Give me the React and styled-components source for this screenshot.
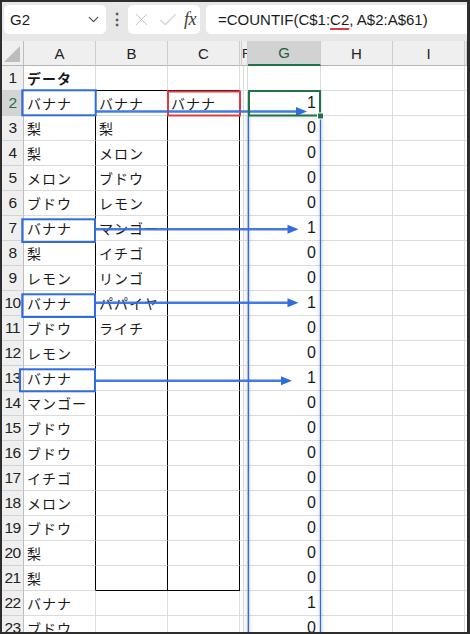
import React from 'react';
import styled, { createGlobalStyle } from 'styled-components';
import { ChevronDown, X, Check } from 'lucide-react';

const GlobalStyle = createGlobalStyle`
  html, body { margin: 0; padding: 0; background: #2b2b2b; }
  body { font-family: "Liberation Sans", "Noto Sans CJK JP", sans-serif; }
`;

const COLS = [
  { key: 'A', w: 72 },
  { key: 'B', w: 72 },
  { key: 'C', w: 72 },
  { key: 'DE', w: 2, label: '' },
  { key: 'F', w: 6 },
  { key: 'G', w: 73 },
  { key: 'H', w: 72 },
  { key: 'I', w: 72 },
];
const TEMPLATE = `22px ${COLS.map((c) => c.w + 'px').join(' ')} 1fr`;

const colA = ['データ', 'バナナ', '梨', '梨', 'メロン', 'ブドウ', 'バナナ', '梨', 'レモン', 'バナナ', 'ブドウ', 'レモン', 'バナナ', 'マンゴー', 'ブドウ', 'ブドウ', 'イチゴ', 'メロン', 'ブドウ', '梨', '梨', 'バナナ', 'ブドウ'];
const colB = ['', 'バナナ', '梨', 'メロン', 'ブドウ', 'レモン', 'マンゴー', 'イチゴ', 'リンゴ', 'パパイヤ', 'ライチ'];
const colG = ['', 1, 0, 0, 0, 0, 1, 0, 0, 1, 0, 0, 1, 0, 0, 0, 0, 0, 0, 0, 0, 1, 0];

const Page = styled.div`
  width: 470px;
  height: 634px;
  box-sizing: border-box;
  padding: 2px 3px 2px 2px;
  background: #2d2d2d;
  overflow: hidden;
`;

const Sheet = styled.div`
  position: relative;
  width: 100%;
  height: 100%;
  background: #fff;
  overflow: hidden;
  display: flex;
  flex-direction: column;
`;

const FormulaBar = styled.div`
  flex: none;
  height: 39px;
  box-sizing: border-box;
  background: #e7e7e7;
  display: flex;
  align-items: flex-start;
  padding: 3px 0 0 2px;
`;

const Box = styled.div`
  height: 29px;
  box-sizing: border-box;
  background: #fff;
  border-radius: 5px;
  display: flex;
  align-items: center;
`;

const NameBox = styled(Box)`
  width: 102px;
  padding: 0 4px 0 6px;
  justify-content: space-between;
  font-size: 15px;
  color: #1b1b1b;
`;

const Dots = styled.div`
  width: 22px;
  height: 29px;
  display: flex;
  align-items: center;
  justify-content: center;
  font-size: 16px;
  font-weight: 700;
  color: #555;
`;

const ActionBox = styled(Box)`
  width: 72px;
  padding: 0 4px 0 3px;
  justify-content: space-between;
`;

const Fx = styled.span`
  font-family: "Liberation Serif", serif;
  font-style: italic;
  font-size: 18px;
  color: #3c3c3c;
  letter-spacing: -0.5px;
`;

const FormulaBox = styled(Box)`
  flex: 1;
  margin-left: 6px;
  padding-left: 12px;
  border-radius: 5px 0 0 5px;
  font-size: 15px;
  color: #1b1b1b;
  white-space: nowrap;
`;

const Squiggle = styled.span`
  text-decoration: underline;
  text-decoration-color: #e0393b;
  text-decoration-thickness: 1.5px;
  text-underline-offset: 3px;
`;

const HeaderRow = styled.div`
  flex: none;
  display: grid;
  grid-template-columns: ${TEMPLATE};
  height: 25px;
  background: #efefef;
`;

const Corner = styled.div`
  box-sizing: border-box;
  border-right: 1px solid #bdbdbd;
  border-bottom: 1px solid #b5b5b5;
  display: flex;
  align-items: flex-end;
  justify-content: flex-end;
  padding: 0 3px 3px 0;
`;

const ColHead = styled.div`
  box-sizing: border-box;
  border-right: 1px solid #cdcdcd;
  border-bottom: ${(p) => (p.$active ? '2px solid #217346' : '1px solid #b5b5b5')};
  background: ${(p) => (p.$active ? '#d2d2d2' : 'transparent')};
  color: ${(p) => (p.$active ? '#1d5e3a' : '#222')};
  display: flex;
  align-items: center;
  justify-content: ${(p) => (p.$narrow ? 'flex-start' : 'center')};
  font-size: ${(p) => (p.$narrow ? '13px' : '15px')};
  overflow: hidden;
`;

const Row = styled.div`
  flex: none;
  display: grid;
  grid-template-columns: ${TEMPLATE};
  height: 25px;
`;

const RowHead = styled.div`
  box-sizing: border-box;
  border-right: 1px solid #bdbdbd;
  border-bottom: 1px solid #d3d3d3;
  background: ${(p) => (p.$active ? '#d4d4d4' : '#efefef')};
  color: ${(p) => (p.$active ? '#217346' : '#222')};
  display: flex;
  align-items: center;
  justify-content: center;
  font-size: 15.5px;
  letter-spacing: -0.5px;
`;

const Cell = styled.div`
  box-sizing: border-box;
  border-right: 1px solid ${(p) => p.$right || '#dcdcdc'};
  border-bottom: 1px solid ${(p) => p.$bottom || '#dcdcdc'};
  display: flex;
  align-items: center;
  justify-content: ${(p) => (p.$num ? 'flex-end' : 'flex-start')};
  padding: ${(p) => (p.$num ? '0 4px 0 0' : '0 0 0 3px')};
  white-space: nowrap;
  font-family: ${(p) => (p.$num ? '"Liberation Sans", sans-serif' : '"Noto Sans CJK JP", sans-serif')};
  font-size: ${(p) => (p.$num ? '16px' : '14px')};
  font-weight: ${(p) => (p.$bold ? 700 : 400)};
  letter-spacing: ${(p) => (p.$num ? '0' : '1px')};
  color: #1a1a1a;
`;

const Overlay = styled.svg`
  position: absolute;
  top: 0;
  left: 0;
  pointer-events: none;
`;

const BLUE = '#2f6ce0';

function Arrow({ y, tip }) {
  return (
    <g>
      <line x1={96} y1={y} x2={tip - 8} y2={y} stroke={BLUE} strokeWidth={2.4} strokeOpacity={0.9} />
      <polygon points={`${tip - 11},${y - 4.5} ${tip},${y} ${tip - 11},${y + 4.5}`} fill={BLUE} />
    </g>
  );
}

function cellBorders(r, key) {
  const inBox = r >= 2 && r <= 21;
  const right = inBox && (key === 'A' || key === 'B' || key === 'C') ? '#000' : undefined;
  const bottom = (r === 1 || r === 21) && (key === 'B' || key === 'C') ? '#000' : undefined;
  return { $right: right, $bottom: bottom };
}

function cellValue(r, key) {
  if (key === 'A') return colA[r - 1];
  if (key === 'B') return colB[r - 1] || '';
  if (key === 'C') return r === 2 ? 'バナナ' : '';
  if (key === 'G') return colG[r - 1];
  return '';
}

export default function App() {
  const rows = Array.from({ length: 23 }, (_, i) => i + 1);
  return (
    <Page>
      <GlobalStyle />
      <Sheet>
        <FormulaBar>
          <NameBox>
            <span>G2</span>
            <ChevronDown size={17} strokeWidth={1.6} color="#444" />
          </NameBox>
          <Dots>⋮</Dots>
          <ActionBox>
            <X size={21} strokeWidth={1.1} color="#c4c4c4" />
            <Check size={22} strokeWidth={1.1} color="#c4c4c4" />
            <Fx>fx</Fx>
          </ActionBox>
          <FormulaBox>
            =COUNTIF(C$1:<Squiggle>C2</Squiggle>, A$2:A$61)
          </FormulaBox>
        </FormulaBar>

        <HeaderRow>
          <Corner>
            <svg width="16" height="16" viewBox="0 0 16 16">
              <polygon points="16,0 16,16 0,16" fill="#bdbdbd" />
            </svg>
          </Corner>
          {COLS.map((c) => (
            <ColHead key={c.key} $active={c.key === 'G'} $narrow={c.w < 10}>
              {c.label === '' ? '' : c.key}
            </ColHead>
          ))}
          <ColHead />
        </HeaderRow>

        {rows.map((r) => (
          <Row key={r}>
            <RowHead $active={r === 2}>{r}</RowHead>
            {COLS.map((c) => {
              const v = cellValue(r, c.key);
              return (
                <Cell key={c.key} {...cellBorders(r, c.key)} $num={c.key === 'G'} $bold={r === 1 && c.key === 'A'}>
                  {v}
                </Cell>
              );
            })}
            <Cell />
          </Row>
        ))}

        <Overlay width="465" height="630" viewBox="0 0 465 630">
          <defs>
            <filter id="soft" x="-20%" y="-5%" width="140%" height="110%">
              <feGaussianBlur stdDeviation="2" />
            </filter>
          </defs>
          <g transform="translate(-2,-2)">
            <rect x={248} y={116} width={73} height={530} fill="none" stroke="rgba(0,0,0,0.10)" strokeWidth={4} filter="url(#soft)" />
            <line x1={248.5} y1={92} x2={248.5} y2={640} stroke={BLUE} strokeWidth={1.3} />
            <line x1={320.5} y1={92} x2={320.5} y2={640} stroke={BLUE} strokeWidth={1.3} />

            <rect x={168} y={91.5} width={72} height={24} fill="none" stroke="#e53a3d" strokeWidth={2} />

            <rect x={22.3} y={90.3} width={73.4} height={25} fill="none" stroke={BLUE} strokeWidth={2} />
            <rect x={22.3} y={219.3} width={72.7} height={22.7} fill="none" stroke={BLUE} strokeWidth={2} />
            <rect x={22.3} y={294.3} width={72.7} height={22.7} fill="none" stroke={BLUE} strokeWidth={2} />
            <rect x={20} y={369.3} width={75} height={22} fill="none" stroke={BLUE} strokeWidth={2} />

            <Arrow y={111.5} tip={307} />
            <Arrow y={229.3} tip={298.5} />
            <Arrow y={302.7} tip={298.5} />
            <Arrow y={380.7} tip={292} />

            <rect x={249} y={91} width={71} height={24.5} fill="none" stroke="#217346" strokeWidth={2} />
            <rect x={317.5} y={113} width={6} height={6} fill="#217346" stroke="#fff" strokeWidth={1} />
          </g>
        </Overlay>
      </Sheet>
    </Page>
  );
}
